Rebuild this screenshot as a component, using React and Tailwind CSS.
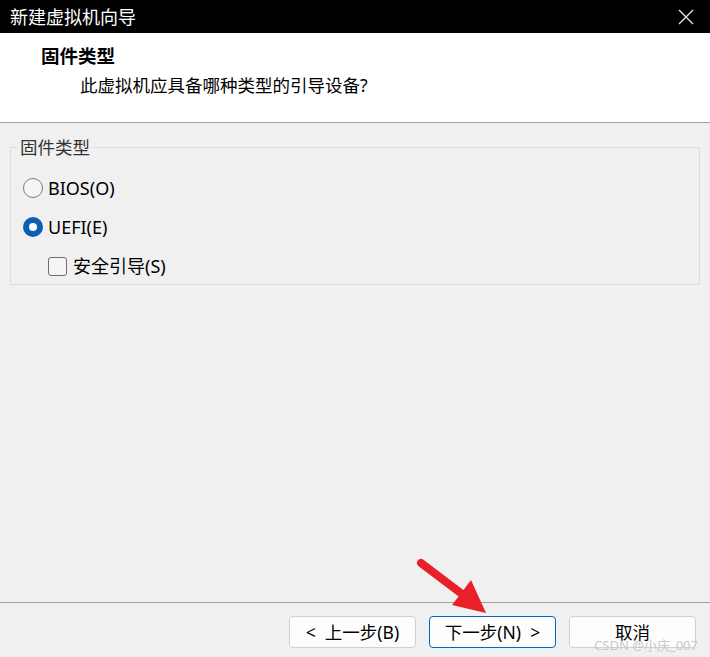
import React from "react";

const cjk = { fontFamily: '"Noto Sans", "Noto Sans CJK SC", sans-serif' };

function Radio({ checked }) {
  return checked ? (
    <span className="w-[20px] h-[20px] rounded-full bg-[#0a5fb4] flex items-center justify-center shrink-0">
      <span className="w-[8px] h-[8px] rounded-full bg-white" />
    </span>
  ) : (
    <span className="w-[20px] h-[20px] rounded-full border border-[#7a7a7a] bg-[#f5f5f5] shrink-0" />
  );
}

function Btn({ children, primary }) {
  return (
    <div
      className={
        "w-[127px] h-[32px] rounded-[4px] bg-[#fdfdfd] flex items-center justify-center text-[17.5px] text-black whitespace-pre " +
        (primary ? "border border-[#0067c0]" : "border border-[#d0d0d0]")
      }
    >
      {children}
    </div>
  );
}

export default function App() {
  return (
    <div className="w-[710px] h-[657px] bg-[#f0f0f0] flex flex-col relative overflow-hidden" style={cjk}>
      <div className="h-[33px] bg-black flex items-center justify-between pl-[10px] pr-[16px]">
        <span className="text-white text-[18px] leading-none">新建虚拟机向导</span>
        <svg width="16" height="16" viewBox="0 0 16 16">
          <path d="M1 1 L15 15 M15 1 L1 15" stroke="#e8e8e8" strokeWidth="1.3" />
        </svg>
      </div>
      <div className="h-[90px] bg-white border-b border-[#a0a0a0] flex flex-col pl-[41px] pt-[10px]">
        <span className="text-[18.5px] font-bold leading-[25px] text-black">固件类型</span>
        <span className="text-[17.5px] leading-[25px] text-black pl-[39px] mt-[5px]">此虚拟机应具备哪种类型的引导设备?</span>
      </div>
      <div className="flex-1 flex flex-col">
        <div className="relative mx-[10px] mt-[24px] h-[138px] border border-[#dcdcdc]">
          <span className="absolute left-[6px] top-[-13px] bg-[#f0f0f0] px-[3px] text-[17.5px] leading-[24px] text-[#333]">固件类型</span>
          <div className="flex flex-col pl-[12px] pt-[29px]">
            <div className="flex items-center gap-[5px] h-[22px]">
              <Radio />
              <span className="text-[18px] text-black">BIOS(O)</span>
            </div>
            <div className="flex items-center gap-[5px] h-[22px] mt-[17px]">
              <Radio checked />
              <span className="text-[18px] text-black">UEFI(E)</span>
            </div>
            <div className="flex items-center gap-[6px] h-[22px] mt-[17px] pl-[25px]">
              <span className="w-[19px] h-[19px] rounded-[3px] border border-[#6e6e6e] bg-[#f5f5f5]" />
              <span className="text-[18px] text-black">安全引导(S)</span>
            </div>
          </div>
        </div>
      </div>
      <div className="h-[55px] border-t border-[#a0a0a0] flex items-start justify-end gap-[13px] pr-[14px] pt-[13px]">
        <Btn>{"<  上一步(B)"}</Btn>
        <Btn primary>{"下一步(N)  >"}</Btn>
        <Btn>取消</Btn>
      </div>
      <span className="absolute right-[12px] bottom-[5px] text-[13px] text-[#c8c8c8] leading-none">CSDN @小庆_007</span>
      <svg className="absolute left-0 top-0 pointer-events-none" width="710" height="657">
        <line x1="421" y1="563" x2="466" y2="597" stroke="#e8202a" strokeWidth="8" strokeLinecap="round" />
        <polygon points="486,613 452,605 471,580" fill="#e8202a" />
      </svg>
    </div>
  );
}
